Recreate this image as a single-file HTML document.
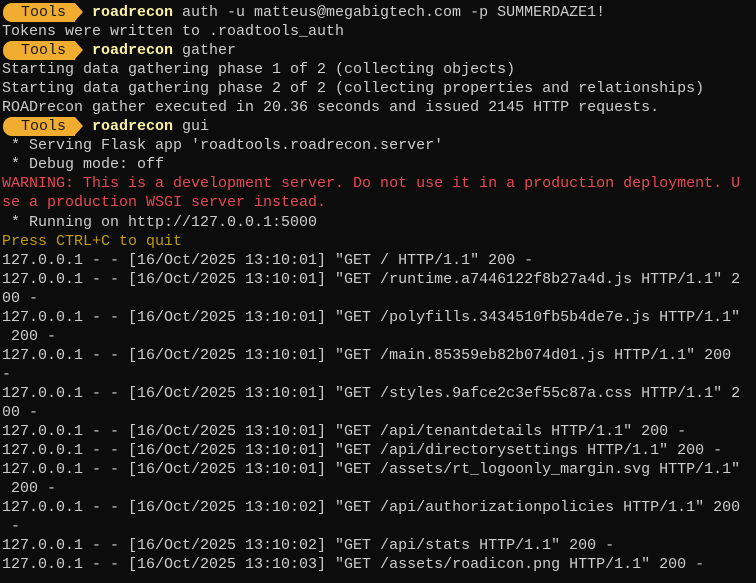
<!DOCTYPE html>
<html><head><meta charset="utf-8"><style>
html,body{margin:0;padding:0;background:#0c0c0c;width:756px;height:583px;overflow:hidden}
.t{position:absolute;left:2px;top:3px;font-family:"Liberation Mono",monospace;font-size:15px;line-height:19.05px;color:#cccccc}
.l{height:19.05px;position:relative;white-space:pre}
.y{color:#f9f1a5;font-weight:bold}
.r{color:#e74856}
.g{color:#c19c00}
.b{position:absolute;left:1px;top:0px;width:72px;height:19px;background:#f0ad30;border-radius:9px 0 0 9px;color:#1a1a1a}
.b:after{content:"";position:absolute;right:-8px;top:0;border-left:8px solid #f0ad30;border-top:9.5px solid transparent;border-bottom:9.5px solid transparent}
.b span{position:absolute;left:18px;top:0px}
.p{padding-left:90px}
</style></head><body><div class="t"><div class="l"><div class="b"><span>Tools</span></div><div class="p"><span class="y">roadrecon</span> auth -u matteus@megabigtech.com -p SUMMERDAZE1!</div></div>
<div class="l">Tokens were written to .roadtools_auth</div>
<div class="l"><div class="b"><span>Tools</span></div><div class="p"><span class="y">roadrecon</span> gather</div></div>
<div class="l">Starting data gathering phase 1 of 2 (collecting objects)</div>
<div class="l">Starting data gathering phase 2 of 2 (collecting properties and relationships)</div>
<div class="l">ROADrecon gather executed in 20.36 seconds and issued 2145 HTTP requests.</div>
<div class="l"><div class="b"><span>Tools</span></div><div class="p"><span class="y">roadrecon</span> gui</div></div>
<div class="l"> * Serving Flask app 'roadtools.roadrecon.server'</div>
<div class="l"> * Debug mode: off</div>
<div class="l r">WARNING: This is a development server. Do not use it in a production deployment. U</div>
<div class="l r">se a production WSGI server instead.</div>
<div class="l"> * Running on http://127.0.0.1:5000</div>
<div class="l g">Press CTRL+C to quit</div>
<div class="l">127.0.0.1 - - [16/Oct/2025 13:10:01] "GET / HTTP/1.1" 200 -</div>
<div class="l">127.0.0.1 - - [16/Oct/2025 13:10:01] "GET /runtime.a7446122f8b27a4d.js HTTP/1.1" 2</div>
<div class="l">00 -</div>
<div class="l">127.0.0.1 - - [16/Oct/2025 13:10:01] "GET /polyfills.3434510fb5b4de7e.js HTTP/1.1"</div>
<div class="l"> 200 -</div>
<div class="l">127.0.0.1 - - [16/Oct/2025 13:10:01] "GET /main.85359eb82b074d01.js HTTP/1.1" 200</div>
<div class="l">-</div>
<div class="l">127.0.0.1 - - [16/Oct/2025 13:10:01] "GET /styles.9afce2c3ef55c87a.css HTTP/1.1" 2</div>
<div class="l">00 -</div>
<div class="l">127.0.0.1 - - [16/Oct/2025 13:10:01] "GET /api/tenantdetails HTTP/1.1" 200 -</div>
<div class="l">127.0.0.1 - - [16/Oct/2025 13:10:01] "GET /api/directorysettings HTTP/1.1" 200 -</div>
<div class="l">127.0.0.1 - - [16/Oct/2025 13:10:01] "GET /assets/rt_logoonly_margin.svg HTTP/1.1"</div>
<div class="l"> 200 -</div>
<div class="l">127.0.0.1 - - [16/Oct/2025 13:10:02] "GET /api/authorizationpolicies HTTP/1.1" 200</div>
<div class="l"> -</div>
<div class="l">127.0.0.1 - - [16/Oct/2025 13:10:02] "GET /api/stats HTTP/1.1" 200 -</div>
<div class="l">127.0.0.1 - - [16/Oct/2025 13:10:03] "GET /assets/roadicon.png HTTP/1.1" 200 -</div></div></body></html>
